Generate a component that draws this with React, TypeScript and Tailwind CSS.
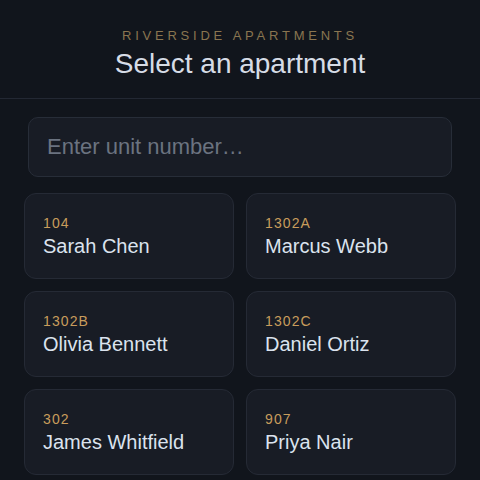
import { useState } from 'react';

const units = [
  { unit: '104', name: 'Sarah Chen' },
  { unit: '1302A', name: 'Marcus Webb' },
  { unit: '1302B', name: 'Olivia Bennett' },
  { unit: '1302C', name: 'Daniel Ortiz' },
  { unit: '302', name: 'James Whitfield' },
  { unit: '907', name: 'Priya Nair' },
];

export default function App() {
  const [query, setQuery] = useState('');
  const shown = units.filter((u) => u.unit.toLowerCase().includes(query.trim().toLowerCase()));

  return (
    <div className="min-h-screen bg-[#11151c] font-['Liberation_Sans',Arial,sans-serif]">
      <header className="border-b border-[#232833] pt-[28px] pb-[16px] text-center">
        <div className="text-[13px] leading-[16px] tracking-[0.29em] text-[#8a7550] uppercase">
          Riverside Apartments
        </div>
        <h1 className="mt-[2px] text-[28px] leading-[36px] text-[#d6dce6]">Select an apartment</h1>
      </header>

      <main className="px-[24px] pt-[18px]">
        <div className="mx-[4px]">
          <input
            value={query}
            onChange={(e) => setQuery(e.target.value)}
            placeholder="Enter unit number…"
            className="h-[60px] w-full rounded-[10px] border border-[#272d38] bg-[#181c25] px-[18px] text-[22px] text-[#d8dee7] placeholder:text-[#6b7380] outline-none"
          />
        </div>

        <div className="mt-[16px] grid grid-cols-2 gap-[12px]">
          {shown.map((u) => (
            <button
              key={u.unit}
              className="flex h-[86px] flex-col items-start justify-start rounded-[12px] border border-[#252a35] bg-[#181c25] pl-[18px] pt-[19px] text-left"
            >
              <div className="text-[14px] leading-[20px] tracking-[0.08em] text-[#c89c5c]">{u.unit}</div>
              <div className="text-[20px] leading-[26px] text-[#dbe3ee]">{u.name}</div>
            </button>
          ))}
        </div>
      </main>
    </div>
  );
}
